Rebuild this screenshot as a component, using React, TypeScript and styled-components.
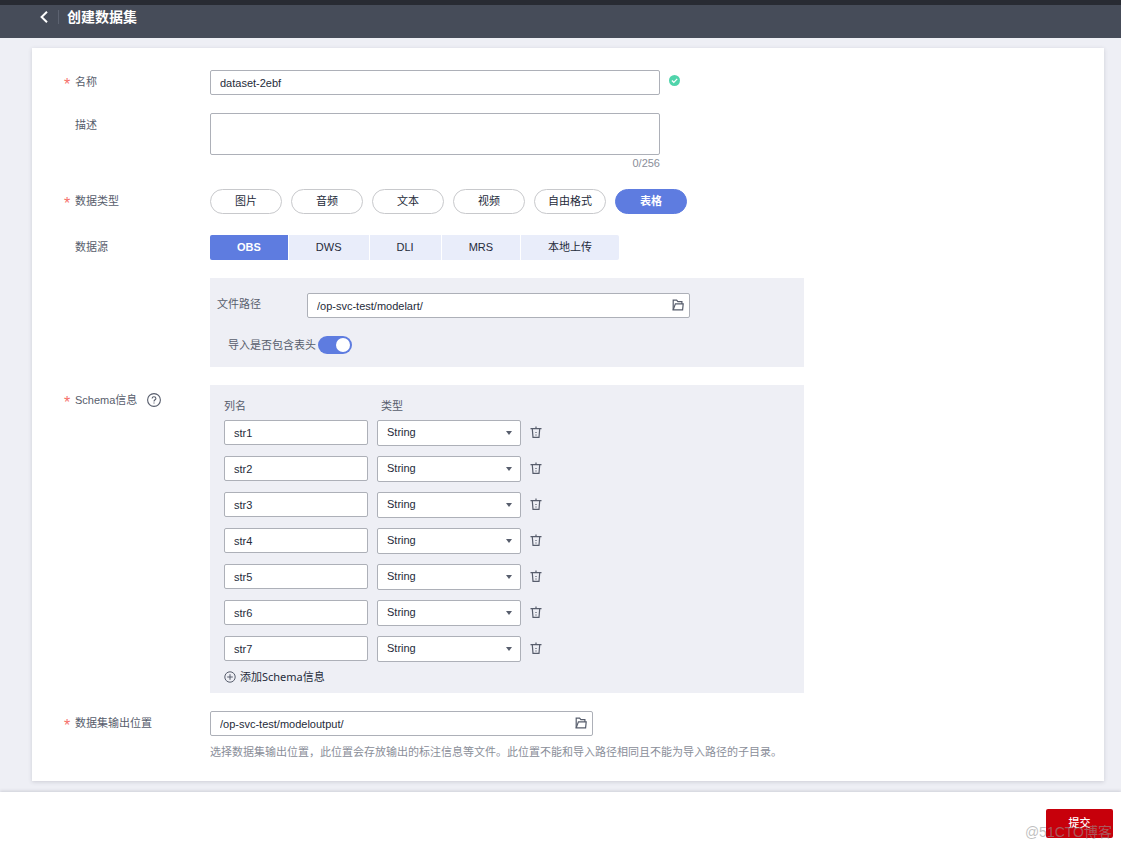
import React, { useState } from "react";
import styled, { createGlobalStyle, css } from "styled-components";

const latin = `"Liberation Sans", "Noto Sans CJK SC", Arial, sans-serif`;

const GlobalStyle = createGlobalStyle`
  *, *::before, *::after { box-sizing: border-box; }
  body {
    margin: 0;
    background: #eeeff5;
    color: #575d6c;
    font: 11px/16px ${latin};
  }
  button, input, select, textarea {
    font: inherit;
    color: #252b3a;
    margin: 0;
  }
  button { cursor: pointer; }
`;

const Page = styled.div`
  display: flex;
  flex-direction: column;
  min-height: 100vh;
`;

const Header = styled.header`
  display: flex;
  align-items: center;
  height: 38px;
  padding: 0 40px 10px;
  border-top: 5px solid #282b33;
  background: #464c59;
`;

const BackButton = styled.button`
  display: flex;
  padding: 0;
  border: 0;
  background: none;
`;

const Title = styled.h1`
  margin: 0 0 0 10px;
  padding-left: 8px;
  border-left: 1px solid #5c6270;
  color: #fff;
  font-size: 14px;
  line-height: 14px;
  font-weight: 700;
`;

const Card = styled.form`
  display: flex;
  flex-direction: column;
  gap: 18px;
  margin: 10px 17px 11px 32px;
  padding: 22px 32px 21px;
  background: #fff;
  box-shadow: 0 1px 4px rgba(70, 76, 89, 0.2);
`;

const Row = styled.div`
  display: flex;
  align-items: flex-start;
`;

const LabelCell = styled.div<{ $height: number }>`
  display: flex;
  align-items: center;
  flex: 0 0 146px;
  height: ${(p) => p.$height}px;
`;

const Star = styled.span`
  flex: 0 0 11px;
  height: 16px;
  color: #f66f6a;
  font-size: 16px;
  line-height: 22px;
`;

const Control = styled.div<{ $width?: number }>`
  flex: 0 1 ${(p) => (p.$width ? `${p.$width}px` : "auto")};
  min-width: 0;
`;

const fieldBox = css`
  border: 1px solid #adb0b8;
  border-radius: 2px;
  background: #fff;
  outline: 0;
  &:focus { border-color: #5e7ce0; }
`;

const TextInput = styled.input`
  ${fieldBox}
  display: block;
  width: 100%;
  height: 25px;
  padding: 1px 9px 0;
`;

const TextArea = styled.textarea`
  ${fieldBox}
  display: block;
  width: 100%;
  height: 42px;
  padding: 4px 9px;
  resize: none;
`;

const Counter = styled.div`
  color: #8a8e99;
  text-align: right;
`;

const StatusIcon = styled.svg`
  flex: none;
  margin: 5px 0 0 9px;
`;

const PillGroup = styled.div`
  display: flex;
  flex-wrap: wrap;
  gap: 9px;
  padding-bottom: 3px;
`;

const Pill = styled.button<{ $active: boolean }>`
  width: 72px;
  height: 25px;
  padding: 0 0 1px;
  border: 1px solid ${(p) => (p.$active ? "#5e7ce0" : "#c8c9cc")};
  border-radius: 13px;
  background: ${(p) => (p.$active ? "#5e7ce0" : "#fff")};
  color: ${(p) => (p.$active ? "#fff" : "#252b3a")};
  font-weight: ${(p) => (p.$active ? 700 : 400)};
`;

const TabGroup = styled.div`
  display: flex;
  gap: 1px;
  border-radius: 2px;
  overflow: hidden;
`;

const Tab = styled.button<{ $active: boolean }>`
  height: 25px;
  padding: 0 27px 1px;
  border: 0;
  background: ${(p) => (p.$active ? "#5e7ce0" : "#e9edfa")};
  color: ${(p) => (p.$active ? "#fff" : "#252b3a")};
  font-weight: ${(p) => (p.$active ? 700 : 400)};
`;

const Panel = styled.div`
  flex: 0 1 594px;
  min-width: 0;
  background: #eeeff5;
`;

const SourcePanel = styled(Panel)`
  display: flex;
  flex-direction: column;
  gap: 18px;
  margin-left: 146px;
  padding: 15px 7px 13px;
`;

const PathLabel = styled.label`
  flex: 0 0 90px;
  line-height: 23px;
`;

const PathBox = styled.div`
  ${fieldBox}
  display: flex;
  align-items: center;
  flex: 0 1 383px;
  min-width: 0;
  height: 25px;
  padding-right: 4px;
`;

const PathInput = styled.input`
  flex: 1;
  min-width: 0;
  height: 23px;
  padding: 1px 9px 0;
  border: 0;
  outline: 0;
  background: none;
`;

const IconButton = styled.button`
  display: flex;
  align-items: center;
  justify-content: center;
  width: 14px;
  height: 16px;
  padding: 0;
  border: 0;
  background: none;
  color: #575d6c;
`;

const FolderButton = styled(IconButton)`
  padding-bottom: 1px;
`;

const DeleteButton = styled(IconButton)`
  width: 12px;
  height: 25px;
`;

const SwitchLabel = styled.label`
  display: flex;
  align-items: center;
  gap: 2px;
  height: 18px;
  padding-left: 11px;
`;

const Switch = styled.input`
  appearance: none;
  display: flex;
  align-items: center;
  width: 34px;
  height: 18px;
  padding: 0 2px;
  border-radius: 9px;
  background: #adb0b8;
  &::before {
    content: "";
    width: 14px;
    height: 14px;
    border-radius: 50%;
    background: #fff;
  }
  &:checked {
    justify-content: flex-end;
    background: #5e7ce0;
  }
`;

const HelpButton = styled(IconButton)`
  margin-left: 10px;
`;

const SchemaPanel = styled(Panel)`
  padding: 13px 14px 8px;
`;

const SchemaTable = styled.table`
  border-collapse: collapse;
  th {
    height: 22px;
    padding: 0;
    font-weight: 400;
    text-align: left;
    vertical-align: top;
  }
  th + th { padding-left: 4px; }
  td {
    height: 36px;
    padding: 0 9px 0 0;
    vertical-align: top;
  }
  tr:last-child td { height: 33px; }
`;

const ColumnField = styled.div`
  width: 144px;
`;

const SelectBox = styled.div`
  position: relative;
  width: 144px;
  &::after {
    content: "";
    position: absolute;
    top: 11px;
    right: 9px;
    border: 3px solid transparent;
    border-top: 4px solid #575d6c;
    border-bottom: 0;
    pointer-events: none;
  }
`;

const Select = styled.select`
  ${fieldBox}
  appearance: none;
  display: block;
  width: 100%;
  height: 26px;
  padding: 0 20px 2px 9px;
`;

const AddButton = styled.button`
  display: flex;
  align-items: center;
  gap: 4px;
  padding: 0;
  border: 0;
  background: none;
  font-family: "Noto Sans", "Noto Sans CJK SC", sans-serif;
`;

const Hint = styled.p`
  margin: 8px 0 0;
  color: #8a8e99;
`;

const Footer = styled.footer`
  position: relative;
  display: flex;
  flex: 1;
  align-items: flex-start;
  justify-content: flex-end;
  padding: 17px 8px 11px;
  background: #fff;
  box-shadow: 0 -1px 3px rgba(70, 76, 89, 0.2);
`;

const SubmitButton = styled.button`
  width: 67px;
  height: 29px;
  padding: 0 0 1px;
  border: 0;
  border-radius: 2px;
  background: #c7000b;
  color: #fff;
  font-weight: 500;
`;

const Watermark = styled.span`
  position: absolute;
  right: 9px;
  bottom: 7px;
  color: rgba(150, 150, 150, 0.6);
  font-size: 14px;
  line-height: 20px;
  pointer-events: none;
`;

const FolderIcon = () => (
  <svg width="12" height="12" viewBox="0 0 12 12" fill="none" stroke="currentColor" strokeWidth="1.2">
    <path d="M1.2 10.9V1.1h3.4l1.3 1.5h4v2.3" />
    <path d="M1.2 10.9 3.4 4.9h7.8L10.6 10.9Z" />
  </svg>
);

const TrashIcon = () => (
  <svg width="12" height="13" viewBox="0 0 12 13" fill="none" stroke="currentColor" strokeWidth="1.2">
    <path d="M.5 2.6h11M6 .6v2M2.3 2.9l.7 8.5h6l.7-8.5M6 6v1M6 8.4v1" />
  </svg>
);

const AddIcon = () => (
  <svg width="12" height="12" viewBox="0 0 12 12" fill="none" stroke="#575d6c">
    <circle cx="6" cy="6" r="5.2" />
    <path d="M6 3.2v5.6M3.2 6h5.6" />
  </svg>
);

const HelpIcon = () => (
  <svg width="14" height="14" viewBox="0 0 14 14" fill="none" stroke="currentColor" strokeWidth="1.1">
    <circle cx="7" cy="7" r="6.4" />
    <path d="M5.1 5.6c0-1.2.8-1.9 1.9-1.9s1.9.7 1.9 1.7c0 1.3-1.9 1.4-1.9 3M7 9.4v1.2" />
  </svg>
);

const FieldLabel = ({ text, htmlFor, required, height = 24, children }: {
  text: string;
  htmlFor?: string;
  required?: boolean;
  height?: number;
  children?: React.ReactNode;
}) => (
  <LabelCell $height={height}>
    <Star aria-hidden="true">{required ? "*" : ""}</Star>
    {htmlFor ? <label htmlFor={htmlFor}>{text}</label> : <span>{text}</span>}
    {children}
  </LabelCell>
);

const dataTypes = ["图片", "音频", "文本", "视频", "自由格式", "表格"];
const sources = ["OBS", "DWS", "DLI", "MRS", "本地上传"];

export default function App() {
  const [dataType, setDataType] = useState("表格");
  const [source, setSource] = useState("OBS");
  const [description, setDescription] = useState("");
  const [columns, setColumns] = useState([1, 2, 3, 4, 5, 6, 7]);

  return (
    <Page>
      <GlobalStyle />
      <Header>
        <BackButton type="button" aria-label="返回">
          <svg width="8" height="12" viewBox="0 0 8 12" fill="none" stroke="#fff" strokeWidth="2">
            <path d="M7 .8 1.6 6 7 11.2" />
          </svg>
        </BackButton>
        <Title>创建数据集</Title>
      </Header>

      <Card id="dataset" onSubmit={(e) => e.preventDefault()}>
        <Row>
          <FieldLabel text="名称" htmlFor="name" required />
          <Control $width={450}>
            <TextInput id="name" defaultValue="dataset-2ebf" />
          </Control>
          <StatusIcon width="11" height="11" viewBox="0 0 11 11" fill="none">
            <circle cx="5.5" cy="5.5" r="5.5" fill="#50d4ab" />
            <path d="M2.9 5.5 4.8 7.3 8.2 3.9" stroke="#fff" strokeWidth="1.2" />
          </StatusIcon>
        </Row>

        <Row>
          <FieldLabel text="描述" htmlFor="description" />
          <Control $width={450}>
            <TextArea
              id="description"
              maxLength={256}
              value={description}
              onChange={(e) => setDescription(e.target.value)}
            />
            <Counter>{description.length}/256</Counter>
          </Control>
        </Row>

        <Row>
          <FieldLabel text="数据类型" required />
          <PillGroup>
            {dataTypes.map((t) => (
              <Pill key={t} type="button" $active={t === dataType} onClick={() => setDataType(t)}>
                {t}
              </Pill>
            ))}
          </PillGroup>
        </Row>

        <Row>
          <FieldLabel text="数据源" />
          <TabGroup>
            {sources.map((s) => (
              <Tab key={s} type="button" $active={s === source} onClick={() => setSource(s)}>
                {s}
              </Tab>
            ))}
          </TabGroup>
        </Row>

        <Row>
          <SourcePanel>
            <Row>
              <PathLabel htmlFor="path">文件路径</PathLabel>
              <PathBox>
                <PathInput id="path" defaultValue="/op-svc-test/modelart/" />
                <FolderButton type="button" aria-label="选择文件路径"><FolderIcon /></FolderButton>
              </PathBox>
            </Row>
            <SwitchLabel>
              导入是否包含表头
              <Switch type="checkbox" role="switch" defaultChecked />
            </SwitchLabel>
          </SourcePanel>
        </Row>

        <Row>
          <FieldLabel text="Schema信息" required height={30}>
            <HelpButton type="button" aria-label="帮助"><HelpIcon /></HelpButton>
          </FieldLabel>
          <SchemaPanel>
            <SchemaTable>
              <thead>
                <tr><th scope="col">列名</th><th scope="col">类型</th></tr>
              </thead>
              <tbody>
                {columns.map((n) => (
                  <tr key={n}>
                    <td>
                      <ColumnField>
                        <TextInput aria-label="列名" defaultValue={`str${n}`} />
                      </ColumnField>
                    </td>
                    <td>
                      <SelectBox>
                        <Select aria-label="类型" defaultValue="String">
                          <option>String</option>
                        </Select>
                      </SelectBox>
                    </td>
                    <td>
                      <DeleteButton
                        type="button"
                        aria-label="删除"
                        onClick={() => setColumns(columns.filter((c) => c !== n))}
                      >
                        <TrashIcon />
                      </DeleteButton>
                    </td>
                  </tr>
                ))}
              </tbody>
            </SchemaTable>
            <AddButton
              type="button"
              onClick={() => setColumns([...columns, Math.max(0, ...columns) + 1])}
            >
              <AddIcon />
              添加Schema信息
            </AddButton>
          </SchemaPanel>
        </Row>

        <Row>
          <FieldLabel text="数据集输出位置" htmlFor="output" required />
          <Control>
            <Row>
              <PathBox>
                <PathInput id="output" defaultValue="/op-svc-test/modeloutput/" />
                <FolderButton type="button" aria-label="选择输出位置"><FolderIcon /></FolderButton>
              </PathBox>
            </Row>
            <Hint>
              选择数据集输出位置，此位置会存放输出的标注信息等文件。此位置不能和导入路径相同且不能为导入路径的子目录。
            </Hint>
          </Control>
        </Row>
      </Card>

      <Footer>
        <SubmitButton type="submit" form="dataset">提交</SubmitButton>
        <Watermark>@51CTO博客</Watermark>
      </Footer>
    </Page>
  );
}
